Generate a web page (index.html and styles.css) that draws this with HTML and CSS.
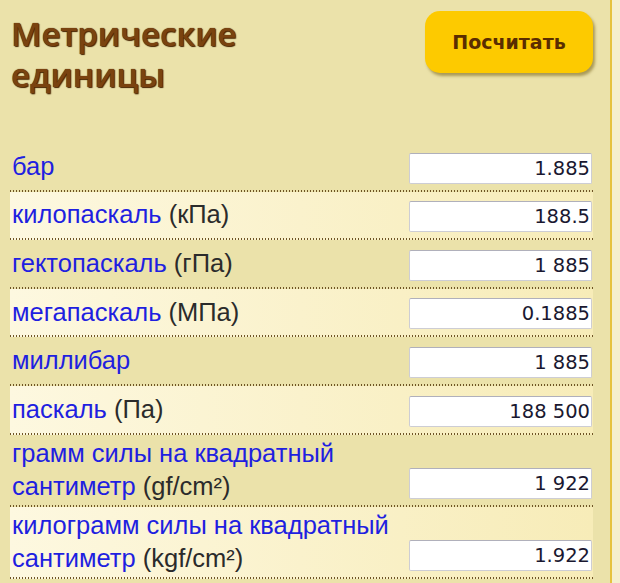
FILE: index.html
```html
<!DOCTYPE html>
<html lang="ru">
<head>
    <meta charset="UTF-8">
    <title>Метрические единицы</title>
    <link rel="stylesheet" href="styles.css">
</head>
<body>
    <div class="panel">
        <div class="header">
            <h1>Метрические<br>единицы</h1>
            <button type="button" class="calc-btn">Посчитать</button>
        </div>

        <div class="row">
            <div class="label"><a href="#">бар</a></div>
            <input type="text" class="value" value="1.885">
        </div>
        <div class="row alt">
            <div class="label"><a href="#">килопаскаль</a> (кПа)</div>
            <input type="text" class="value" value="188.5">
        </div>
        <div class="row">
            <div class="label"><a href="#">гектопаскаль</a> (гПа)</div>
            <input type="text" class="value" value="1 885">
        </div>
        <div class="row alt">
            <div class="label"><a href="#">мегапаскаль</a> (МПа)</div>
            <input type="text" class="value" value="0.1885">
        </div>
        <div class="row">
            <div class="label"><a href="#">миллибар</a></div>
            <input type="text" class="value" value="1 885">
        </div>
        <div class="row alt">
            <div class="label"><a href="#">паскаль</a> (Па)</div>
            <input type="text" class="value" value="188 500">
        </div>
        <div class="row">
            <div class="label">
                <a href="#">грамм силы на квадратный</a><br>
                <a href="#">сантиметр</a> (gf/cm²)
            </div>
            <input type="text" class="value" value="1 922">
        </div>
        <div class="row alt">
            <div class="label">
                <a href="#">килограмм силы на квадратный</a><br>
                <a href="#">сантиметр</a> (kgf/cm²)
            </div>
            <input type="text" class="value" value="1.922">
        </div>
    </div>
</body>
</html>
```

FILE: styles.css
```css
body {
    margin: 0;
    background-color: #f5efcc;
    font-family: "Liberation Sans", Arial, sans-serif;
}
.panel {
    width: 583px;
    padding: 0 17px 0 10px;
    background-color: #ebe2aa;
    border-right: 2px solid #e6c23e;
    min-height: 583px;
}
.header {
    height: 143px;
    display: flex;
    justify-content: space-between;
    align-items: flex-start;
    padding-top: 11px;
    box-sizing: border-box;
}
h1 {
    margin: 2px 0 0 1px;
    font-family: "Open Sans", sans-serif;
    font-size: 33px;
    font-weight: 600;
    line-height: 41px;
    color: #7a4310;
    text-shadow: 0 0 1px #3d1d00, 1px 1px 1px #4a2600;
}
.calc-btn {
    width: 168px;
    height: 62px;
    background-color: #fdca00;
    color: #5a2d00;
    border: none;
    border-radius: 15px;
    font-family: "DejaVu Sans", Verdana, sans-serif;
    font-size: 19px;
    font-weight: bold;
    box-shadow: 2px 3px 3px rgba(115, 95, 20, 0.55);
    cursor: pointer;
}
.row {
    display: flex;
    align-items: center;
    justify-content: space-between;
    padding-bottom: 2px;
    background: linear-gradient(90deg, #6f5526 1.5px, transparent 1.5px) left bottom / 3px 2px repeat-x;
}
.row.alt {
    background:
        linear-gradient(90deg, #6f5526 1.5px, transparent 1.5px) left bottom / 3px 2px repeat-x,
        linear-gradient(90deg, #fdf8e0, #f7ecb8);
}
.label {
    width: 390px;
    padding: 2.2px 0 2.2px 2px;
    font-size: 25.5px;
    line-height: 33px;
    color: #2b2b2b;
}
.label a {
    color: #1f1fe0;
    text-decoration: none;
}
.value {
    align-self: flex-end;
    width: 183px;
    height: 31px;
    margin: 9.6px 1px 6px 0;
    padding: 0 1px 0 4px;
    box-sizing: border-box;
    border: 1px solid #cdcdd4;
    border-top-color: #b0b0bb;
    border-radius: 2px;
    background: white;
    font-family: "DejaVu Sans", Verdana, sans-serif;
    font-size: 19.5px;
    color: #1a1830;
    text-align: right;
}
```
